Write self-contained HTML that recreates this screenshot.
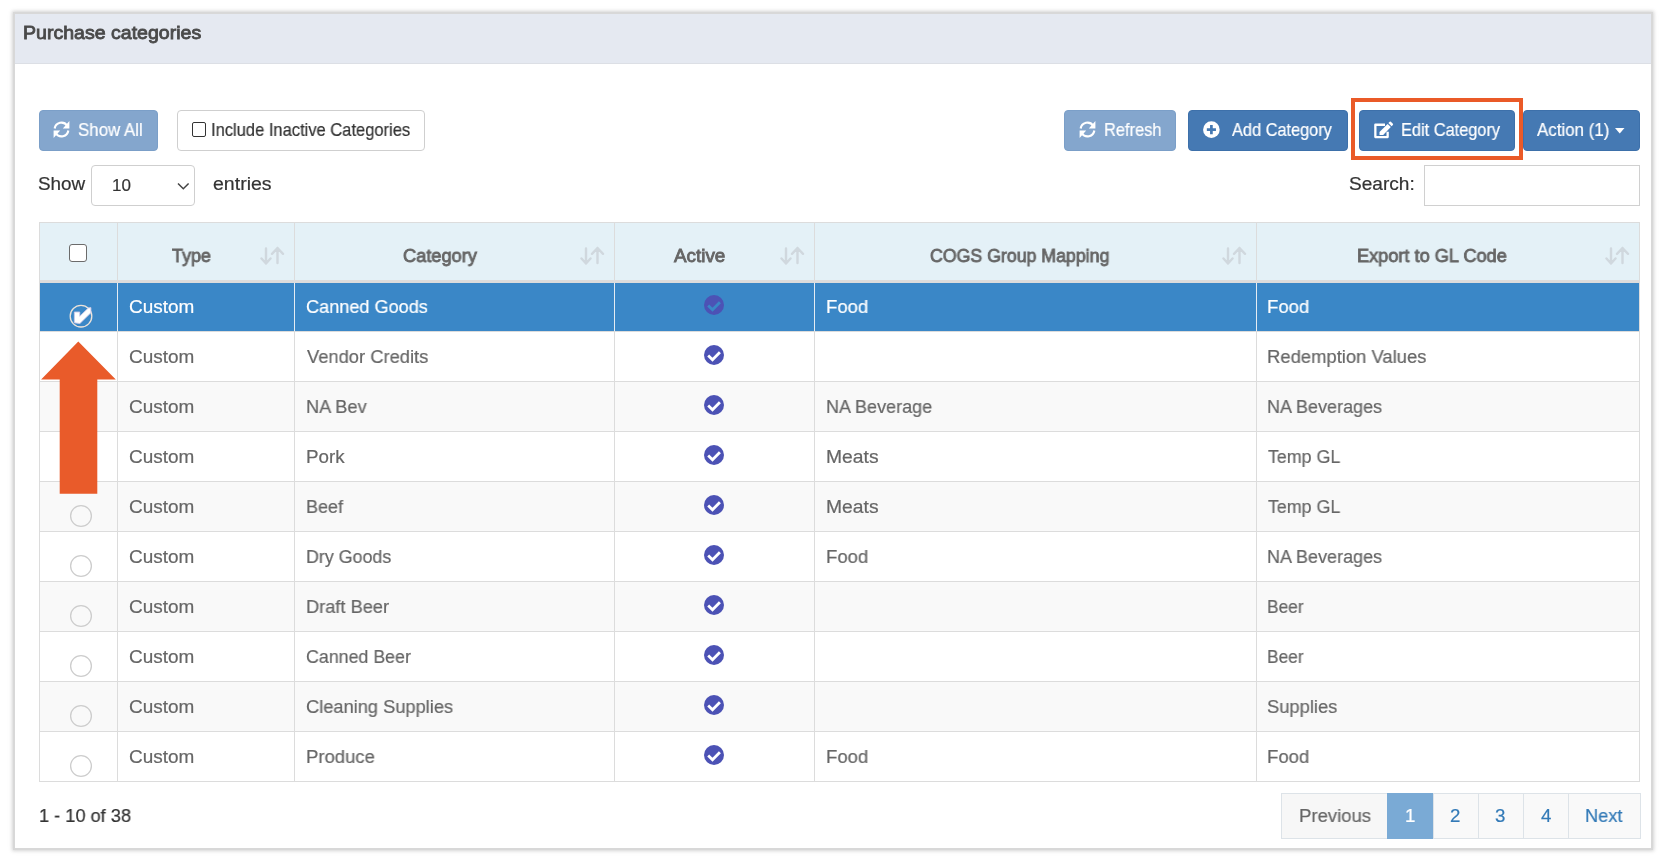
<!DOCTYPE html>
<html><head><meta charset="utf-8"><title>Purchase categories</title>
<style>
html,body{margin:0;padding:0;background:#fff;width:1664px;height:862px;overflow:hidden;position:relative;}
.t{position:absolute;white-space:nowrap;font-family:"Liberation Sans",sans-serif;line-height:20px;transform-origin:0 0;will-change:transform;}
.r{position:absolute;}
svg{overflow:visible}
</style></head><body>
<div class="r" style="left:15px;top:14px;width:1636px;height:834px;background:#fff;box-shadow:0 0 0 2px #d8d8d8,0 0 3px 3px rgba(0,0,0,0.12),0 0 6px 3px rgba(0,0,0,0.06);"></div>
<div class="r" style="left:15px;top:14px;width:1636px;height:49px;background:#e5e9f1;"></div>
<div class="r" style="left:15px;top:63px;width:1636px;height:1px;background:#dcdfe5;"></div>
<div class="r" style="left:39px;top:110px;width:119px;height:41px;background:#84a6cd;border:1px solid #7b9fc8;border-radius:4px;box-sizing:border-box;"></div>
<svg width="28" height="28" viewBox="0 0 28 28" style="position:absolute;left:48.4px;top:116px"><path d="M6.67 12.5 A6.9 6.9 0 0 1 19.15 9.54 M20.33 14.5 A6.9 6.9 0 0 1 7.85 17.46" fill="none" stroke="#fff" stroke-width="2.15"/><path d="M21.4 5.0 V12.5 H14.8 Z M5.6 22.0 V14.5 H12.2 Z" fill="#fff"/></svg>
<div class="r" style="left:177px;top:110px;width:248px;height:41px;background:#fff;border:1px solid #cfcfcf;border-radius:4px;box-sizing:border-box;"></div>
<div class="r" style="left:191.8px;top:122.1px;width:14.199999999999989px;height:14.900000000000006px;border:1.8px solid #333;border-radius:2px;box-sizing:border-box;"></div>
<div class="r" style="left:1064px;top:110px;width:112px;height:41px;background:#84a6cd;border:1px solid #7b9fc8;border-radius:4px;box-sizing:border-box;"></div>
<svg width="28" height="28" viewBox="0 0 28 28" style="position:absolute;left:1074px;top:116px"><path d="M6.67 12.5 A6.9 6.9 0 0 1 19.15 9.54 M20.33 14.5 A6.9 6.9 0 0 1 7.85 17.46" fill="none" stroke="#fff" stroke-width="2.15"/><path d="M21.4 5.0 V12.5 H14.8 Z M5.6 22.0 V14.5 H12.2 Z" fill="#fff"/></svg>
<div class="r" style="left:1188px;top:110px;width:160px;height:41px;background:#4579b3;border:1px solid #3d70aa;border-radius:4px;box-sizing:border-box;"></div>
<svg width="28" height="28" viewBox="0 0 28 28" style="position:absolute;left:1198px;top:116px"><circle cx="13.4" cy="13.65" r="8.3" fill="#fff"/><path d="M8.85 13.65 H17.95 M13.4 9.1 V18.2" stroke="#4579b3" stroke-width="2.7"/></svg>
<div class="r" style="left:1351px;top:98px;width:172px;height:62px;border:4px solid #ea5a28;box-sizing:border-box;"></div>
<div class="r" style="left:1359px;top:110px;width:156px;height:41px;background:#4579b3;border:1px solid #3d70aa;border-radius:4px;box-sizing:border-box;"></div>
<svg viewBox="0 0 20 18" width="20" height="18" style="position:absolute;left:1374px;top:120.5px"><path d="M11.0 3.75 H1.35 V16.05 H13.65 V10.8" fill="none" stroke="#fff" stroke-width="2.3" stroke-linejoin="round"/><path d="M5.5 11.0 L13.6 2.9 L16.8 6.1 L9.2 13.9 L5.5 14.1 Z" fill="#fff"/><path d="M14.4 2.1 L15.7 0.8 Q16.3 0.3 16.9 0.8 L18.9 2.8 Q19.4 3.4 18.9 4.0 L17.6 5.3 Z" fill="#fff"/></svg>
<div class="r" style="left:1523px;top:110px;width:117px;height:41px;background:#4579b3;border:1px solid #3d70aa;border-radius:4px;box-sizing:border-box;"></div>
<svg width="10" height="6" style="position:absolute;left:1615px;top:127.5px"><path d="M0 0 H9.5 L4.75 5.5 Z" fill="#fff"/></svg>
<div class="r" style="left:91px;top:165px;width:104px;height:41px;background:#fff;border:1px solid #cfcfcf;border-radius:4px;box-sizing:border-box;"></div>
<svg width="14" height="9" style="position:absolute;left:177px;top:182px"><path d="M1 1.5 L6.3 6.8 L11.6 1.5" fill="none" stroke="#444" stroke-width="1.5"/></svg>
<div class="r" style="left:1424px;top:165px;width:216px;height:41px;background:#fff;border:1px solid #d0d0d0;box-sizing:border-box;"></div>
<div class="r" style="left:39px;top:222px;width:1601px;height:61px;background:#e4f1f7;"></div>
<div class="r" style="left:39px;top:222px;width:1601px;height:1px;background:#dcdcdc;"></div>
<div class="r" style="left:39px;top:280px;width:1601px;height:3px;background:#dcdcdc;"></div>
<div class="r" style="left:39px;top:283px;width:1601px;height:48px;background:#3a87c7;"></div>
<div class="r" style="left:39px;top:331px;width:1601px;height:1px;background:#dcdcdc;"></div>
<div class="r" style="left:39px;top:332px;width:1601px;height:49px;background:#fff;"></div>
<div class="r" style="left:39px;top:381px;width:1601px;height:1px;background:#dcdcdc;"></div>
<div class="r" style="left:39px;top:382px;width:1601px;height:49px;background:#f9f9f9;"></div>
<div class="r" style="left:39px;top:431px;width:1601px;height:1px;background:#dcdcdc;"></div>
<div class="r" style="left:39px;top:432px;width:1601px;height:49px;background:#fff;"></div>
<div class="r" style="left:39px;top:481px;width:1601px;height:1px;background:#dcdcdc;"></div>
<div class="r" style="left:39px;top:482px;width:1601px;height:49px;background:#f9f9f9;"></div>
<div class="r" style="left:39px;top:531px;width:1601px;height:1px;background:#dcdcdc;"></div>
<div class="r" style="left:39px;top:532px;width:1601px;height:49px;background:#fff;"></div>
<div class="r" style="left:39px;top:581px;width:1601px;height:1px;background:#dcdcdc;"></div>
<div class="r" style="left:39px;top:582px;width:1601px;height:49px;background:#f9f9f9;"></div>
<div class="r" style="left:39px;top:631px;width:1601px;height:1px;background:#dcdcdc;"></div>
<div class="r" style="left:39px;top:632px;width:1601px;height:49px;background:#fff;"></div>
<div class="r" style="left:39px;top:681px;width:1601px;height:1px;background:#dcdcdc;"></div>
<div class="r" style="left:39px;top:682px;width:1601px;height:49px;background:#f9f9f9;"></div>
<div class="r" style="left:39px;top:731px;width:1601px;height:1px;background:#dcdcdc;"></div>
<div class="r" style="left:39px;top:732px;width:1601px;height:49px;background:#fff;"></div>
<div class="r" style="left:39px;top:781px;width:1601px;height:1px;background:#dcdcdc;"></div>
<div class="r" style="left:39px;top:222px;width:1px;height:560px;background:#dcdcdc;"></div>
<div class="r" style="left:117px;top:222px;width:1px;height:560px;background:#dcdcdc;"></div>
<div class="r" style="left:294px;top:222px;width:1px;height:560px;background:#dcdcdc;"></div>
<div class="r" style="left:614px;top:222px;width:1px;height:560px;background:#dcdcdc;"></div>
<div class="r" style="left:814px;top:222px;width:1px;height:560px;background:#dcdcdc;"></div>
<div class="r" style="left:1256px;top:222px;width:1px;height:560px;background:#dcdcdc;"></div>
<div class="r" style="left:1639px;top:222px;width:1px;height:560px;background:#dcdcdc;"></div>
<div class="r" style="left:117px;top:283px;width:1px;height:48px;background:#e4ecf3;"></div>
<div class="r" style="left:294px;top:283px;width:1px;height:48px;background:#e4ecf3;"></div>
<div class="r" style="left:614px;top:283px;width:1px;height:48px;background:#e4ecf3;"></div>
<div class="r" style="left:814px;top:283px;width:1px;height:48px;background:#e4ecf3;"></div>
<div class="r" style="left:1256px;top:283px;width:1px;height:48px;background:#e4ecf3;"></div>
<svg width="24" height="18" viewBox="0 0 24 18" style="position:absolute;left:259.7px;top:246.5px"><g fill="none" stroke="#d0d8de" stroke-width="2.4" stroke-linecap="round" stroke-linejoin="round"><path d="M6 1.5 V16.5 M1.5 11.5 L6 16.5 L10.5 11.5"/><path d="M17.5 1 V16 M12 6.8 L17.5 1 L23 6.8"/></g></svg>
<svg width="24" height="18" viewBox="0 0 24 18" style="position:absolute;left:579.7px;top:246.5px"><g fill="none" stroke="#d0d8de" stroke-width="2.4" stroke-linecap="round" stroke-linejoin="round"><path d="M6 1.5 V16.5 M1.5 11.5 L6 16.5 L10.5 11.5"/><path d="M17.5 1 V16 M12 6.8 L17.5 1 L23 6.8"/></g></svg>
<svg width="24" height="18" viewBox="0 0 24 18" style="position:absolute;left:779.7px;top:246.5px"><g fill="none" stroke="#d0d8de" stroke-width="2.4" stroke-linecap="round" stroke-linejoin="round"><path d="M6 1.5 V16.5 M1.5 11.5 L6 16.5 L10.5 11.5"/><path d="M17.5 1 V16 M12 6.8 L17.5 1 L23 6.8"/></g></svg>
<svg width="24" height="18" viewBox="0 0 24 18" style="position:absolute;left:1221.7px;top:246.5px"><g fill="none" stroke="#d0d8de" stroke-width="2.4" stroke-linecap="round" stroke-linejoin="round"><path d="M6 1.5 V16.5 M1.5 11.5 L6 16.5 L10.5 11.5"/><path d="M17.5 1 V16 M12 6.8 L17.5 1 L23 6.8"/></g></svg>
<svg width="24" height="18" viewBox="0 0 24 18" style="position:absolute;left:1604.7px;top:246.5px"><g fill="none" stroke="#d0d8de" stroke-width="2.4" stroke-linecap="round" stroke-linejoin="round"><path d="M6 1.5 V16.5 M1.5 11.5 L6 16.5 L10.5 11.5"/><path d="M17.5 1 V16 M12 6.8 L17.5 1 L23 6.8"/></g></svg>
<div class="r" style="left:69px;top:244px;width:18px;height:18px;background:#fff;border:1.6px solid #6b6b6b;border-radius:3px;box-sizing:border-box;"></div>
<svg width="20" height="20" viewBox="0 0 20 20" style="position:absolute;left:704.0px;top:295px"><circle cx="10" cy="10" r="10" fill="#4c52b5"/><path d="M4.2 10.6 L8.5 14.8 L15.9 7.2" fill="none" stroke="#3a87c7" stroke-width="2.8"/></svg>
<svg width="24" height="24" viewBox="0 0 24 24" style="position:absolute;left:69px;top:303.5px"><circle cx="12" cy="12.2" r="10.8" fill="none" stroke="#ece3da" stroke-width="1.3"/><path d="M5.35 8.0 L10.75 8.0 L10.75 12.3 L19.3 4.0 L21.9 3.6 L21.9 8.7 L10.9 19.5 L5.35 18.8 Z" fill="#fff" stroke="#cdc8e6" stroke-width="0.9" stroke-linejoin="round"/></svg>
<svg width="20" height="20" viewBox="0 0 20 20" style="position:absolute;left:704.0px;top:345px"><circle cx="10" cy="10" r="10" fill="#4c52b5"/><path d="M4.2 10.6 L8.5 14.8 L15.9 7.2" fill="none" stroke="#fff" stroke-width="2.8"/></svg>
<svg width="24" height="24" viewBox="0 0 24 24" style="position:absolute;left:69px;top:353.5px"><circle cx="12" cy="12" r="10.4" fill="none" stroke="#cdcdcd" stroke-width="1.3"/></svg>
<svg width="20" height="20" viewBox="0 0 20 20" style="position:absolute;left:704.0px;top:395px"><circle cx="10" cy="10" r="10" fill="#4c52b5"/><path d="M4.2 10.6 L8.5 14.8 L15.9 7.2" fill="none" stroke="#fff" stroke-width="2.8"/></svg>
<svg width="24" height="24" viewBox="0 0 24 24" style="position:absolute;left:69px;top:403.5px"><circle cx="12" cy="12" r="10.4" fill="none" stroke="#cdcdcd" stroke-width="1.3"/></svg>
<svg width="20" height="20" viewBox="0 0 20 20" style="position:absolute;left:704.0px;top:445px"><circle cx="10" cy="10" r="10" fill="#4c52b5"/><path d="M4.2 10.6 L8.5 14.8 L15.9 7.2" fill="none" stroke="#fff" stroke-width="2.8"/></svg>
<svg width="24" height="24" viewBox="0 0 24 24" style="position:absolute;left:69px;top:453.5px"><circle cx="12" cy="12" r="10.4" fill="none" stroke="#cdcdcd" stroke-width="1.3"/></svg>
<svg width="20" height="20" viewBox="0 0 20 20" style="position:absolute;left:704.0px;top:495px"><circle cx="10" cy="10" r="10" fill="#4c52b5"/><path d="M4.2 10.6 L8.5 14.8 L15.9 7.2" fill="none" stroke="#fff" stroke-width="2.8"/></svg>
<svg width="24" height="24" viewBox="0 0 24 24" style="position:absolute;left:69px;top:503.5px"><circle cx="12" cy="12" r="10.4" fill="none" stroke="#cdcdcd" stroke-width="1.3"/></svg>
<svg width="20" height="20" viewBox="0 0 20 20" style="position:absolute;left:704.0px;top:545px"><circle cx="10" cy="10" r="10" fill="#4c52b5"/><path d="M4.2 10.6 L8.5 14.8 L15.9 7.2" fill="none" stroke="#fff" stroke-width="2.8"/></svg>
<svg width="24" height="24" viewBox="0 0 24 24" style="position:absolute;left:69px;top:553.5px"><circle cx="12" cy="12" r="10.4" fill="none" stroke="#cdcdcd" stroke-width="1.3"/></svg>
<svg width="20" height="20" viewBox="0 0 20 20" style="position:absolute;left:704.0px;top:595px"><circle cx="10" cy="10" r="10" fill="#4c52b5"/><path d="M4.2 10.6 L8.5 14.8 L15.9 7.2" fill="none" stroke="#fff" stroke-width="2.8"/></svg>
<svg width="24" height="24" viewBox="0 0 24 24" style="position:absolute;left:69px;top:603.5px"><circle cx="12" cy="12" r="10.4" fill="none" stroke="#cdcdcd" stroke-width="1.3"/></svg>
<svg width="20" height="20" viewBox="0 0 20 20" style="position:absolute;left:704.0px;top:645px"><circle cx="10" cy="10" r="10" fill="#4c52b5"/><path d="M4.2 10.6 L8.5 14.8 L15.9 7.2" fill="none" stroke="#fff" stroke-width="2.8"/></svg>
<svg width="24" height="24" viewBox="0 0 24 24" style="position:absolute;left:69px;top:653.5px"><circle cx="12" cy="12" r="10.4" fill="none" stroke="#cdcdcd" stroke-width="1.3"/></svg>
<svg width="20" height="20" viewBox="0 0 20 20" style="position:absolute;left:704.0px;top:695px"><circle cx="10" cy="10" r="10" fill="#4c52b5"/><path d="M4.2 10.6 L8.5 14.8 L15.9 7.2" fill="none" stroke="#fff" stroke-width="2.8"/></svg>
<svg width="24" height="24" viewBox="0 0 24 24" style="position:absolute;left:69px;top:703.5px"><circle cx="12" cy="12" r="10.4" fill="none" stroke="#cdcdcd" stroke-width="1.3"/></svg>
<svg width="20" height="20" viewBox="0 0 20 20" style="position:absolute;left:704.0px;top:745px"><circle cx="10" cy="10" r="10" fill="#4c52b5"/><path d="M4.2 10.6 L8.5 14.8 L15.9 7.2" fill="none" stroke="#fff" stroke-width="2.8"/></svg>
<svg width="24" height="24" viewBox="0 0 24 24" style="position:absolute;left:69px;top:753.5px"><circle cx="12" cy="12" r="10.4" fill="none" stroke="#cdcdcd" stroke-width="1.3"/></svg>
<svg width="80" height="160" style="position:absolute;left:40px;top:340px"><path d="M38.3 1.6 L75.8 39.4 L57.3 39.4 L57.3 153.8 L19.7 153.8 L19.7 39.4 L1.1 39.4 Z" fill="#e95b2a"/></svg>
<div class="r" style="left:1281px;top:793px;width:360px;height:46px;background:#f9f9f9;border:1px solid #dde3e8;box-sizing:border-box;"></div>
<div class="r" style="left:1282px;top:794px;width:105px;height:44px;background:#f7f7f7;"></div>
<div class="r" style="left:1433px;top:793px;width:1px;height:46px;background:#dde3e8;"></div>
<div class="r" style="left:1478px;top:793px;width:1px;height:46px;background:#dde3e8;"></div>
<div class="r" style="left:1523px;top:793px;width:1px;height:46px;background:#dde3e8;"></div>
<div class="r" style="left:1568px;top:793px;width:1px;height:46px;background:#dde3e8;"></div>
<div class="r" style="left:1387px;top:793px;width:46px;height:46px;background:#7aaad5;"></div>
<div class="t" style="left:22.97px;top:22.72px;font-size:19px;color:#4a4a4a;transform:scaleX(1.0291);-webkit-text-stroke:0.85px #4a4a4a;">Purchase categories</div>
<div class="t" style="left:78.25px;top:119.97px;font-size:17.7px;color:#fff;transform:scaleX(0.9530);-webkit-text-stroke:0.2px #fff;">Show All</div>
<div class="t" style="left:210.77px;top:119.97px;font-size:17.7px;color:#333;transform:scaleX(0.9335);-webkit-text-stroke:0.2px #333;">Include Inactive Categories</div>
<div class="t" style="left:1103.67px;top:119.87px;font-size:17.7px;color:#fff;transform:scaleX(0.9283);-webkit-text-stroke:0.2px #fff;">Refresh</div>
<div class="t" style="left:1232.40px;top:119.77px;font-size:17.7px;color:#fff;transform:scaleX(0.9231);-webkit-text-stroke:0.2px #fff;">Add Category</div>
<div class="t" style="left:1401.08px;top:119.77px;font-size:17.7px;color:#fff;transform:scaleX(0.9245);-webkit-text-stroke:0.2px #fff;">Edit Category</div>
<div class="t" style="left:1537.30px;top:119.67px;font-size:17.7px;color:#fff;transform:scaleX(0.9560);-webkit-text-stroke:0.2px #fff;">Action (1)</div>
<div class="t" style="left:37.99px;top:174.42px;font-size:18.7px;color:#333;transform:scaleX(1.0109);-webkit-text-stroke:0.2px #333;">Show</div>
<div class="t" style="left:111.80px;top:176.11px;font-size:17px;color:#333;transform:scaleX(1.0000);-webkit-text-stroke:0.2px #333;">10</div>
<div class="t" style="left:213.35px;top:174.42px;font-size:18.7px;color:#333;transform:scaleX(1.0455);-webkit-text-stroke:0.2px #333;">entries</div>
<div class="t" style="left:1348.98px;top:174.22px;font-size:18.7px;color:#333;transform:scaleX(1.0210);-webkit-text-stroke:0.2px #333;">Search:</div>
<div class="t" style="left:171.50px;top:245.72px;font-size:18.7px;color:#666;transform:scaleX(0.9625);-webkit-text-stroke:0.85px #666;">Type</div>
<div class="t" style="left:402.70px;top:245.72px;font-size:18.7px;color:#666;transform:scaleX(0.9750);-webkit-text-stroke:0.85px #666;">Category</div>
<div class="t" style="left:673.60px;top:245.72px;font-size:18.7px;color:#666;transform:scaleX(1.0078);-webkit-text-stroke:0.85px #666;">Active</div>
<div class="t" style="left:930.30px;top:245.72px;font-size:18.7px;color:#666;transform:scaleX(0.9487);-webkit-text-stroke:0.85px #666;">COGS Group Mapping</div>
<div class="t" style="left:1357.03px;top:245.72px;font-size:18.7px;color:#666;transform:scaleX(0.9719);-webkit-text-stroke:0.85px #666;">Export to GL Code</div>
<div class="t" style="left:128.89px;top:296.52px;font-size:18.7px;color:#fff;transform:scaleX(1.0145);-webkit-text-stroke:0.2px #fff;">Custom</div>
<div class="t" style="left:305.73px;top:296.52px;font-size:18.7px;color:#fff;transform:scaleX(0.9694);-webkit-text-stroke:0.2px #fff;">Canned Goods</div>
<div class="t" style="left:825.61px;top:296.52px;font-size:18.7px;color:#fff;transform:scaleX(0.9902);-webkit-text-stroke:0.2px #fff;">Food</div>
<div class="t" style="left:1267.41px;top:296.52px;font-size:18.7px;color:#fff;transform:scaleX(0.9902);-webkit-text-stroke:0.2px #fff;">Food</div>
<div class="t" style="left:128.89px;top:346.52px;font-size:18.7px;color:#666;transform:scaleX(1.0145);-webkit-text-stroke:0.2px #666;">Custom</div>
<div class="t" style="left:306.70px;top:346.52px;font-size:18.7px;color:#666;transform:scaleX(0.9813);-webkit-text-stroke:0.2px #666;">Vendor Credits</div>
<div class="t" style="left:1267.41px;top:346.52px;font-size:18.7px;color:#666;transform:scaleX(0.9862);-webkit-text-stroke:0.2px #666;">Redemption Values</div>
<div class="t" style="left:128.89px;top:396.52px;font-size:18.7px;color:#666;transform:scaleX(1.0145);-webkit-text-stroke:0.2px #666;">Custom</div>
<div class="t" style="left:305.73px;top:396.52px;font-size:18.7px;color:#666;transform:scaleX(0.9738);-webkit-text-stroke:0.2px #666;">NA Bev</div>
<div class="t" style="left:825.64px;top:396.52px;font-size:18.7px;color:#666;transform:scaleX(0.9642);-webkit-text-stroke:0.2px #666;">NA Beverage</div>
<div class="t" style="left:1267.44px;top:396.52px;font-size:18.7px;color:#666;transform:scaleX(0.9636);-webkit-text-stroke:0.2px #666;">NA Beverages</div>
<div class="t" style="left:128.89px;top:446.52px;font-size:18.7px;color:#666;transform:scaleX(1.0145);-webkit-text-stroke:0.2px #666;">Custom</div>
<div class="t" style="left:305.70px;top:446.52px;font-size:18.7px;color:#666;transform:scaleX(1.0027);-webkit-text-stroke:0.2px #666;">Pork</div>
<div class="t" style="left:825.57px;top:446.52px;font-size:18.7px;color:#666;transform:scaleX(1.0327);-webkit-text-stroke:0.2px #666;">Meats</div>
<div class="t" style="left:1268.40px;top:446.52px;font-size:18.7px;color:#666;transform:scaleX(0.9526);-webkit-text-stroke:0.2px #666;">Temp GL</div>
<div class="t" style="left:128.89px;top:496.52px;font-size:18.7px;color:#666;transform:scaleX(1.0145);-webkit-text-stroke:0.2px #666;">Custom</div>
<div class="t" style="left:305.74px;top:496.52px;font-size:18.7px;color:#666;transform:scaleX(0.9632);-webkit-text-stroke:0.2px #666;">Beef</div>
<div class="t" style="left:825.57px;top:496.52px;font-size:18.7px;color:#666;transform:scaleX(1.0327);-webkit-text-stroke:0.2px #666;">Meats</div>
<div class="t" style="left:1268.40px;top:496.52px;font-size:18.7px;color:#666;transform:scaleX(0.9526);-webkit-text-stroke:0.2px #666;">Temp GL</div>
<div class="t" style="left:128.89px;top:546.52px;font-size:18.7px;color:#666;transform:scaleX(1.0145);-webkit-text-stroke:0.2px #666;">Custom</div>
<div class="t" style="left:305.75px;top:546.52px;font-size:18.7px;color:#666;transform:scaleX(0.9545);-webkit-text-stroke:0.2px #666;">Dry Goods</div>
<div class="t" style="left:825.61px;top:546.52px;font-size:18.7px;color:#666;transform:scaleX(0.9902);-webkit-text-stroke:0.2px #666;">Food</div>
<div class="t" style="left:1267.44px;top:546.52px;font-size:18.7px;color:#666;transform:scaleX(0.9636);-webkit-text-stroke:0.2px #666;">NA Beverages</div>
<div class="t" style="left:128.89px;top:596.52px;font-size:18.7px;color:#666;transform:scaleX(1.0145);-webkit-text-stroke:0.2px #666;">Custom</div>
<div class="t" style="left:305.72px;top:596.52px;font-size:18.7px;color:#666;transform:scaleX(0.9750);-webkit-text-stroke:0.2px #666;">Draft Beer</div>
<div class="t" style="left:1267.47px;top:596.52px;font-size:18.7px;color:#666;transform:scaleX(0.9282);-webkit-text-stroke:0.2px #666;">Beer</div>
<div class="t" style="left:128.89px;top:646.52px;font-size:18.7px;color:#666;transform:scaleX(1.0145);-webkit-text-stroke:0.2px #666;">Custom</div>
<div class="t" style="left:305.75px;top:646.52px;font-size:18.7px;color:#666;transform:scaleX(0.9523);-webkit-text-stroke:0.2px #666;">Canned Beer</div>
<div class="t" style="left:1267.47px;top:646.52px;font-size:18.7px;color:#666;transform:scaleX(0.9282);-webkit-text-stroke:0.2px #666;">Beer</div>
<div class="t" style="left:128.89px;top:696.52px;font-size:18.7px;color:#666;transform:scaleX(1.0145);-webkit-text-stroke:0.2px #666;">Custom</div>
<div class="t" style="left:305.72px;top:696.52px;font-size:18.7px;color:#666;transform:scaleX(0.9765);-webkit-text-stroke:0.2px #666;">Cleaning Supplies</div>
<div class="t" style="left:1267.42px;top:696.52px;font-size:18.7px;color:#666;transform:scaleX(0.9814);-webkit-text-stroke:0.2px #666;">Supplies</div>
<div class="t" style="left:128.89px;top:746.52px;font-size:18.7px;color:#666;transform:scaleX(1.0145);-webkit-text-stroke:0.2px #666;">Custom</div>
<div class="t" style="left:305.71px;top:746.52px;font-size:18.7px;color:#666;transform:scaleX(0.9897);-webkit-text-stroke:0.2px #666;">Produce</div>
<div class="t" style="left:825.61px;top:746.52px;font-size:18.7px;color:#666;transform:scaleX(0.9902);-webkit-text-stroke:0.2px #666;">Food</div>
<div class="t" style="left:1267.41px;top:746.52px;font-size:18.7px;color:#666;transform:scaleX(0.9902);-webkit-text-stroke:0.2px #666;">Food</div>
<div class="t" style="left:38.73px;top:805.52px;font-size:18.7px;color:#333;transform:scaleX(0.9731);-webkit-text-stroke:0.2px #333;">1 - 10 of 38</div>
<div class="t" style="left:1298.61px;top:805.92px;font-size:18.7px;color:#666;transform:scaleX(0.9915);-webkit-text-stroke:0.2px #666;">Previous</div>
<div class="t" style="left:1405.10px;top:805.82px;font-size:18.7px;color:#fff;transform:scaleX(1.0000);-webkit-text-stroke:0.2px #fff;">1</div>
<div class="t" style="left:1449.60px;top:805.82px;font-size:18.7px;color:#337ab7;transform:scaleX(1.0000);-webkit-text-stroke:0.2px #337ab7;">2</div>
<div class="t" style="left:1494.60px;top:805.82px;font-size:18.7px;color:#337ab7;transform:scaleX(1.0000);-webkit-text-stroke:0.2px #337ab7;">3</div>
<div class="t" style="left:1540.50px;top:805.82px;font-size:18.7px;color:#337ab7;transform:scaleX(1.0000);-webkit-text-stroke:0.2px #337ab7;">4</div>
<div class="t" style="left:1584.83px;top:805.82px;font-size:18.7px;color:#337ab7;transform:scaleX(0.9737);-webkit-text-stroke:0.2px #337ab7;">Next</div>
</body></html>
